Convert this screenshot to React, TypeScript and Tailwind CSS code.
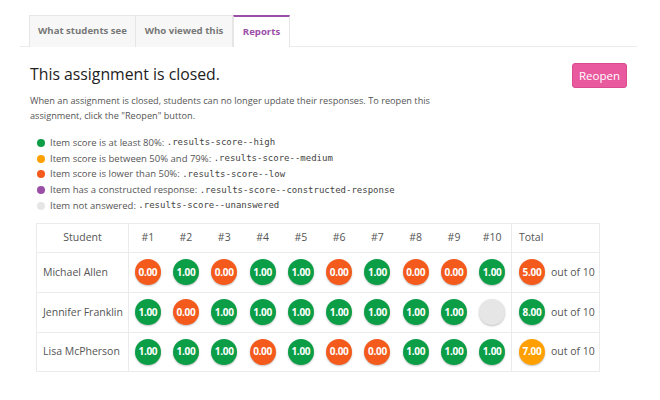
import React from 'react';

type Score = number | null;

const students: { name: string; scores: Score[]; total: string; level: 'high' | 'medium' | 'low' }[] = [
  { name: 'Michael Allen', scores: [0, 1, 0, 1, 1, 0, 1, 0, 0, 1], total: '5.00', level: 'low' },
  { name: 'Jennifer Franklin', scores: [1, 0, 1, 1, 1, 1, 1, 1, 1, null], total: '8.00', level: 'high' },
  { name: 'Lisa McPherson', scores: [1, 1, 1, 0, 1, 0, 0, 1, 1, 1], total: '7.00', level: 'medium' },
];

const colors = {
  high: 'bg-[#0b9e47]',
  medium: 'bg-[#ffa000]',
  low: 'bg-[#f35a1c]',
  constructed: 'bg-[#9a4fa6]',
  unanswered: 'bg-[#e6e6e6]',
};

function Badge({ value, level }: { value?: string; level: keyof typeof colors }) {
  return (
    <span
      className={`mx-auto flex w-[26px] h-[26px] items-center justify-center rounded-full text-[10px] font-bold tracking-[-0.3px] text-white shadow-[0_1px_2px_rgba(0,0,0,0.25)] ${colors[level]}`}
    >
      {value}
    </span>
  );
}

const legend: { level: keyof typeof colors; text: string; code: string }[] = [
  { level: 'high', text: 'Item score is at least 80%:', code: '.results-score--high' },
  { level: 'medium', text: 'Item score is between 50% and 79%:', code: '.results-score--medium' },
  { level: 'low', text: 'Item score is lower than 50%:', code: '.results-score--low' },
  { level: 'constructed', text: 'Item has a constructed response:', code: '.results-score--constructed-response' },
  { level: 'unanswered', text: 'Item not answered:', code: '.results-score--unanswered' },
];

export default function App() {
  return (
    <div className="w-[660px] h-[400px] bg-white pl-5 pr-[23px] pt-[15px] font-['Open_Sans',sans-serif] text-[#555]">
      {/* Tabs */}
      <div className="flex border-b border-[#ececec] pl-[9px]">
        <div className="-mb-px flex h-[32px] w-[107px] items-center justify-center border border-b-0 border-[#e6e6e6] bg-[#f7f7f7] text-[9.6px] font-bold text-[#777]">
          What students see
        </div>
        <div className="-mb-px flex h-[32px] w-[97px] items-center justify-center border border-l-0 border-b-0 border-[#e6e6e6] bg-[#f7f7f7] text-[9.6px] font-bold text-[#777]">
          Who viewed this
        </div>
        <div className="-mb-px flex h-[32px] w-[57px] items-center justify-center border-x border-t-2 border-x-[#e6e6e6] border-t-[#9b4fa8] bg-white text-[9.6px] font-bold text-[#9b4fa8]">
          Reports
        </div>
      </div>

      <div className="px-[10px]">
        <div className="mt-[16px] flex items-start justify-between">
          <h1 className="text-[15.8px] leading-[22px] text-[#222]">This assignment is closed.</h1>
          <button className="h-[25px] w-[55px] rounded-[3px] border border-[#d94a8e] bg-[#e9599e] text-[11.5px] text-white">
            Reopen
          </button>
        </div>

        <p className="mt-[5px] w-[420px] text-[9.2px] leading-[15px] text-[#555]">
          When an assignment is closed, students can no longer update their responses. To reopen this
          assignment, click the "Reopen" button.
        </p>

        <ul className="mt-[12px] pl-[7px]">
          {legend.map((l) => (
            <li key={l.code} className="flex h-[15.8px] items-center text-[9.5px] text-[#555]">
              <span className={`mr-[5px] h-[8px] w-[8px] rounded-full ${colors[l.level]}`} />
              <span>{l.text}&nbsp;</span>
              <code className="font-['DejaVu_Sans_Mono',monospace] text-[9px] text-[#444]">{l.code}</code>
            </li>
          ))}
        </ul>

        <table className="ml-[6px] mt-[9px] w-[563px] table-fixed border-collapse text-[10.5px] text-[#555]">
          <colgroup>
            <col className="w-[92px]" />
            {Array.from({ length: 10 }).map((_, i) => (
              <col key={i} className="w-[38.3px]" />
            ))}
            <col className="w-[88px]" />
          </colgroup>
          <thead>
            <tr className="h-[29px]">
              <th className="border border-[#ebebeb] font-normal">Student</th>
              {Array.from({ length: 10 }).map((_, i) => (
                <th key={i} className="border-y border-[#ebebeb] font-normal">
                  #{i + 1}
                </th>
              ))}
              <th className="border border-[#ebebeb] pl-[7px] text-left font-normal">Total</th>
            </tr>
          </thead>
          <tbody>
            {students.map((s, r) => (
              <tr key={s.name} className={r === 2 ? 'h-[39px]' : 'h-[40px]'}>
                <td className="border border-[#ebebeb] pl-[6px]">{s.name}</td>
                {s.scores.map((v, i) => (
                  <td key={i} className="border-y border-[#ebebeb]">
                    {v === null ? (
                      <Badge level="unanswered" />
                    ) : (
                      <Badge value={v === 1 ? '1.00' : '0.00'} level={v === 1 ? 'high' : 'low'} />
                    )}
                  </td>
                ))}
                <td className="border border-[#ebebeb] pl-[7px]">
                  <div className="flex items-center gap-[6px]">
                    <Badge value={s.total} level={s.level} />
                    <span className="flex-1">out of 10</span>
                  </div>
                </td>
              </tr>
            ))}
          </tbody>
        </table>
      </div>
    </div>
  );
}
